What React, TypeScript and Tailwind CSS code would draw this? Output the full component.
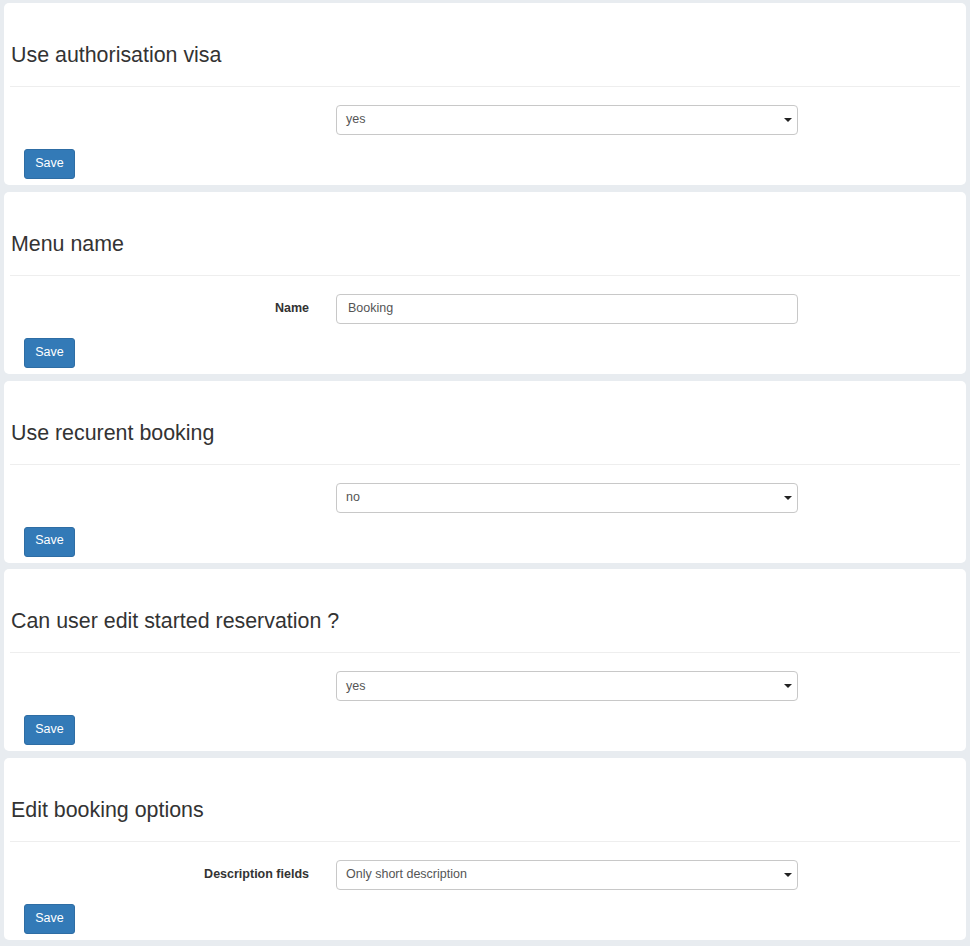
import React from "react";

type Section = {
  title: string;
  label?: string;
  kind: "select" | "input";
  value: string;
};

const sections: Section[] = [
  { title: "Use authorisation visa", kind: "select", value: "yes" },
  { title: "Menu name", label: "Name", kind: "input", value: "Booking" },
  { title: "Use recurent booking", kind: "select", value: "no" },
  { title: "Can user edit started reservation ?", kind: "select", value: "yes" },
  { title: "Edit booking options", label: "Description fields", kind: "select", value: "Only short description" },
];

function Card({ s }: { s: Section }) {
  return (
    <div className="h-[182px] bg-white rounded-[5px] px-[6px] pt-[41px]">
      <h3 className="text-[21.4px] leading-[22px] text-[#333] pl-[1px] m-0 font-normal">{s.title}</h3>
      <div className="mt-[20px] border-t border-[#eee]" />
      <div className="mt-[18px] flex items-center h-[30px]">
        <div className="w-[299px] text-right text-[12.5px] font-bold text-[#333] leading-none -mt-[2px]">{s.label ?? ""}</div>
        <div className="ml-[27px] w-[462px] h-[30px]">
          {s.kind === "select" ? (
            <div className="relative h-[30px] border border-[#c8c8c8] rounded-[4px] bg-white flex items-center pl-[9px] text-[12.5px] text-[#555] leading-none">
              <span className="-mt-[1px]">{s.value}</span>
              <svg className="absolute right-[5px] top-[12px]" width="8" height="4" viewBox="0 0 8 4">
                <path d="M0 0 L8 0 L4 4 Z" fill="#222" />
              </svg>
            </div>
          ) : (
            <div className="h-[30px] border border-[#c8c8c8] rounded-[4px] bg-white flex items-center pl-[11px] text-[12.5px] text-[#555] leading-none">
              <span className="-mt-[2px]">{s.value}</span>
            </div>
          )}
        </div>
      </div>
      <div className="mt-[14px] pl-[14px]">
        <button className="w-[51px] h-[30px] bg-[#337ab7] border border-[#2e6da4] rounded-[3px] text-white text-[12.5px] leading-none pb-[2px]">
          Save
        </button>
      </div>
    </div>
  );
}

export default function App() {
  return (
    <div
      className="min-h-[946px] bg-[#e8ecf0] px-[4px] pt-[3px] flex flex-col gap-[6.75px]"
      style={{ fontFamily: '"Liberation Sans", Arial, sans-serif' }}
    >
      {sections.map((s, i) => (
        <Card key={i} s={s} />
      ))}
    </div>
  );
}
